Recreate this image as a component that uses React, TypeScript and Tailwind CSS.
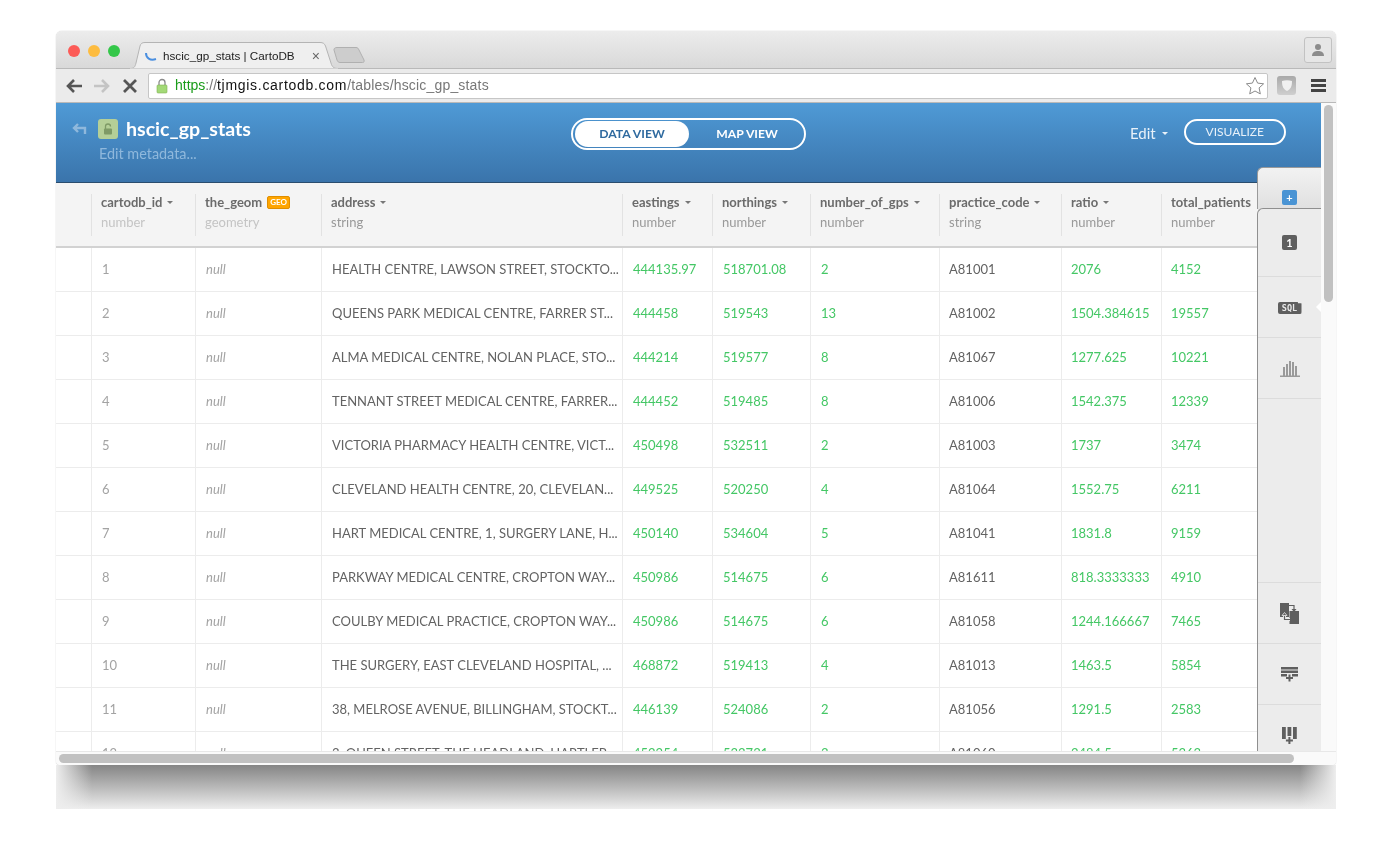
import React from "react";

const rows: string[][] = [
  ["1", "HEALTH CENTRE, LAWSON STREET, STOCKTO...", "444135.97", "518701.08", "2", "A81001", "2076", "4152"],
  ["2", "QUEENS PARK MEDICAL CENTRE, FARRER ST...", "444458", "519543", "13", "A81002", "1504.384615", "19557"],
  ["3", "ALMA MEDICAL CENTRE, NOLAN PLACE, STO...", "444214", "519577", "8", "A81067", "1277.625", "10221"],
  ["4", "TENNANT STREET MEDICAL CENTRE, FARRER...", "444452", "519485", "8", "A81006", "1542.375", "12339"],
  ["5", "VICTORIA PHARMACY HEALTH CENTRE, VICT...", "450498", "532511", "2", "A81003", "1737", "3474"],
  ["6", "CLEVELAND HEALTH CENTRE, 20, CLEVELAN...", "449525", "520250", "4", "A81064", "1552.75", "6211"],
  ["7", "HART MEDICAL CENTRE, 1, SURGERY LANE, H...", "450140", "534604", "5", "A81041", "1831.8", "9159"],
  ["8", "PARKWAY MEDICAL CENTRE, CROPTON WAY...", "450986", "514675", "6", "A81611", "818.3333333", "4910"],
  ["9", "COULBY MEDICAL PRACTICE, CROPTON WAY...", "450986", "514675", "6", "A81058", "1244.166667", "7465"],
  ["10", "THE SURGERY, EAST CLEVELAND HOSPITAL, ...", "468872", "519413", "4", "A81013", "1463.5", "5854"],
  ["11", "38, MELROSE AVENUE, BILLINGHAM, STOCKT...", "446139", "524086", "2", "A81056", "1291.5", "2583"],
  ["12", "3, QUEEN STREET, THE HEADLAND, HARTLEP...", "452254", "533731", "3", "A81060", "2484.5", "5363"],
];

const Caret = () => (
  <span className="ml-[5px] inline-block h-0 w-0 border-x-[3px] border-t-[3px] border-x-transparent border-t-[#777] align-middle" />
);

function HeadCell({ w, name, type, caret = true, faint = false, geo = false }: { w: string; name: string; type: string; caret?: boolean; faint?: boolean; geo?: boolean }) {
  return (
    <div className={`${w} flex h-full shrink-0 items-center`}>
      <div className="h-[42px] w-px shrink-0 bg-[#e2e2e2]" />
      <div className="mb-[5px] pl-[9px] leading-none">
        <div className="flex h-[16px] items-center whitespace-nowrap text-[13px] font-bold text-[#6b6b6b]">
          {name}
          {caret && <Caret />}
          {geo && (
            <span className="ml-[5px] rounded-[2px] border border-[#e08e00] bg-[#ffa500] px-[2px] text-[8px] leading-[11px] font-bold text-white">GEO</span>
          )}
        </div>
        <div className={`mt-[3px] text-[13px] leading-[16px] ${faint ? "text-[#c4c4c4]" : "text-[#999]"}`}>{type}</div>
      </div>
    </div>
  );
}

function Cell({ w, children, cls, pad = "pl-[10px]" }: { w: string; children: React.ReactNode; cls: string; pad?: string }) {
  return (
    <div className={`${w} flex h-full shrink-0 items-center overflow-hidden whitespace-nowrap border-l border-[#ececec] ${pad} text-[13px] ${cls}`}>
      {children}
    </div>
  );
}

const SideRow = ({ h, children, last = false }: { h: string; children?: React.ReactNode; last?: boolean }) => (
  <div className={`${h} flex shrink-0 items-center justify-center ${last ? "" : "border-b border-[#dcdcdc]"}`}>{children}</div>
);

export default function App() {
  const green = "text-[#44c765]";
  return (
    <div className="relative h-[845px] w-full overflow-hidden bg-white pl-[56px] pt-[31px] font-['Lato',sans-serif] will-change-transform">
      <div className="flex w-[1280px] flex-col">
        <div className="relative flex h-[734px] flex-col overflow-hidden rounded-t-[6px] rounded-b-[4px] bg-white shadow-[0_0_1px_rgba(0,0,0,0.35)]">
          {/* tab strip */}
          <div className="flex h-[38px] shrink-0 items-end border-b border-[#b9b9b9] bg-gradient-to-b from-[#ececec] to-[#d9d9d9] pl-[12px] font-['Liberation_Sans',sans-serif]">
            <div className="flex gap-[8px] self-center pt-[2px]">
              <span className="h-[12px] w-[12px] rounded-full bg-[#fc5b57]" />
              <span className="h-[12px] w-[12px] rounded-full bg-[#fdbc40]" />
              <span className="h-[12px] w-[12px] rounded-full bg-[#34c749]" />
            </div>
            <div className="relative -mb-px ml-[10px] flex h-[27px] w-[208px] shrink-0 items-center pl-[14px]">
              <svg width="208" height="27" viewBox="0 0 208 27" className="absolute inset-0">
                <path d="M0 26.500C4 26.500 5 25 6 21L10 4C10.800 1.500 12 .5 15 .5H190C193 .5 194.500 1.500 195.500 4L201 21C202 25 204 26.500 208 26.500Z" fill="#efefef" stroke="#b4b4b4" />
                <rect x="0" y="26.500" width="208" height="1" fill="#efefef" />
              </svg>
              <svg width="14" height="14" viewBox="0 0 14 14" className="relative mt-[3px]"><path d="M2 3c0 5 4 8 10 6" fill="none" stroke="#4a8fe0" strokeWidth="2" /></svg>
              <span className="relative ml-[5px] whitespace-nowrap text-[11.700px] text-[#222]">hscic_gp_stats | CartoDB</span>
              <span className="relative ml-[17px] text-[14px] leading-none text-[#666]">×</span>
            </div>
            <svg width="32" height="16" viewBox="0 0 32 16" className="relative mb-[5px] ml-[-5px]">
              <path d="M4 .5H23C24.500 .5 25.500 1.500 26 3L31 13C31.500 14.500 31 15.500 29.500 15.500H7C5.500 15.500 4.500 14.500 4 13L1 3C.7 1.500 2 .5 4 .5Z" fill="#cdcdcd" stroke="#b0b0b0" />
            </svg>
            <div className="ml-auto mr-[4px] flex h-[26px] w-[28px] items-center justify-center self-center rounded-[3px] border border-[#c2c2c2] bg-[#e6e6e6]">
              <svg width="16" height="14" viewBox="0 0 16 14" fill="#8c8c8c"><circle cx="8" cy="4" r="3" /><path d="M2 13c0-4 3-5 6-5s6 1 6 5z" /></svg>
            </div>
          </div>
          {/* toolbar */}
          <div className="flex h-[34px] shrink-0 items-center border-b border-[#b9b9b9] bg-[#ebebeb] font-['Liberation_Sans',sans-serif]">
            <svg width="18" height="16" viewBox="0 0 18 16" className="ml-[9px]" fill="none" stroke="#555" strokeWidth="2.600"><path d="M17 8H3M9 2 3 8l6 6" /></svg>
            <svg width="18" height="16" viewBox="0 0 18 16" className="ml-[10px]" fill="none" stroke="#c4c4c4" strokeWidth="2.600"><path d="M1 8h14M9 2l6 6-6 6" /></svg>
            <svg width="14" height="14" viewBox="0 0 14 14" className="ml-[12px]" fill="none" stroke="#555" strokeWidth="2.800"><path d="M1 1l12 12M13 1 1 13" /></svg>
            <div className="ml-[11px] flex h-[26px] w-[1120px] shrink-0 items-center rounded-[2px] border border-[#c6c6c6] bg-white pl-[7px] text-[14px]">
              <svg width="12" height="16" viewBox="0 0 12 16"><path d="M3 7V4.500a3 3 0 0 1 6 0V7" fill="none" stroke="#8a8a8a" strokeWidth="1.300" /><rect x="1" y="7" width="10" height="8" rx="1" fill="#a3d977" stroke="#7fb356" strokeWidth=".6" /></svg>
              <span className="ml-[7px] whitespace-nowrap">
                <span className="text-[#1a9c1a]">https</span><span className="text-[#777]">://</span><span className="tracking-[0.7px] text-[#111]">tjmgis.cartodb.com</span><span className="tracking-[0.18px] text-[#777]">/tables/hscic_gp_stats</span>
              </span>
              <svg width="20" height="19" viewBox="0 0 20 19" className="ml-auto mr-[2px]" fill="#fff" stroke="#8a8a8a" strokeWidth="1"><path d="m10 1.500 2.600 5.600 6 .7-4.500 4.100 1.200 6L10 15l-5.300 2.900 1.200-6L1.400 7.800l6-.7z" /></svg>
            </div>
            <div className="ml-[9px] flex h-[19px] w-[19px] items-center justify-center rounded-[3px] bg-gradient-to-b from-[#a9a9a9] to-[#cfcfcf]">
              <svg width="12" height="13" viewBox="0 0 12 13"><path d="M1 2c3-1 7-1 10 0 0 5-1 8-5 10C2 10 1 7 1 2z" fill="#f0f0f0" /></svg>
            </div>
            <div className="ml-[15px] flex w-[15px] flex-col gap-[2.500px]">
              <span className="h-[2.500px] bg-[#444]" />
              <span className="h-[2.500px] bg-[#444]" />
              <span className="h-[2.500px] bg-[#444]" />
            </div>
          </div>
          {/* page */}
          <div className="relative flex min-h-0 flex-1">
            <div className="flex w-[1265px] shrink-0 flex-col overflow-hidden">
              {/* blue header */}
              <div className="flex h-[80px] shrink-0 border-b border-[#2a4d6e] bg-gradient-to-b from-[#4f9ad6] to-[#3a74ab]">
                <div className="w-[515px] shrink-0 pl-[16px] pt-[16px]">
                  <div className="flex h-[20px] items-center">
                    <svg width="16" height="12" viewBox="0 0 16 12" fill="none" stroke="#8fb8dc" strokeWidth="2.400"><path d="M6 1 2 5l4 4M2 5h11v6" /></svg>
                    <span className="ml-[10px] flex h-[20px] w-[20px] items-center justify-center rounded-[3px] bg-[#b5cf97]">
                      <svg width="10" height="12" viewBox="0 0 10 12"><path d="M2.500 6V3.500a2.500 2.500 0 0 1 5 0" fill="none" stroke="#7f9a66" strokeWidth="1.300" /><rect x="1" y="5.500" width="8" height="6" rx="1" fill="#7f9a66" /></svg>
                    </span>
                    <span className="ml-[8px] text-[19.600px] leading-none font-bold text-white">hscic_gp_stats</span>
                  </div>
                  <div className="ml-[27px] mt-[6px] text-[14.400px] leading-[17px] text-[#8fb8dc]">Edit metadata...</div>
                </div>
                <div className="mt-[15px] flex h-[32px] w-[235px] shrink-0 items-center rounded-full border-2 border-white p-[2px] text-[12.200px] font-bold">
                  <span className="flex h-[26px] w-[114px] items-center justify-center rounded-full bg-white text-[#2f6a9f]">DATA VIEW</span>
                  <span className="flex h-[26px] flex-1 items-center justify-center pl-[3px] text-white">MAP VIEW</span>
                </div>
                <div className="ml-[324px] mt-[17px] flex h-[26px] items-center text-[15px] text-[#e8f1f9]">
                  Edit
                  <span className="ml-[6px] h-0 w-0 border-x-[3.500px] border-t-[3.500px] border-x-transparent border-t-[#e8f1f9]" />
                </div>
                <div className="ml-[16px] mt-[16px] flex h-[26px] w-[102px] items-center justify-center rounded-full border-2 border-white text-[12px] text-[#e8f1f9]">VISUALIZE</div>
              </div>
              {/* table head */}
              <div className="flex h-[65px] shrink-0 items-center border-b-2 border-[#d2d2d2] bg-[#f4f4f4]">
                <div className="w-[35px] shrink-0" />
                <HeadCell w="w-[104px]" name="cartodb_id" type="number" faint />
                <HeadCell w="w-[126px]" name="the_geom" type="geometry" caret={false} geo faint />
                <HeadCell w="w-[301px]" name="address" type="string" />
                <HeadCell w="w-[90px]" name="eastings" type="number" />
                <HeadCell w="w-[98px]" name="northings" type="number" />
                <HeadCell w="w-[129px]" name="number_of_gps" type="number" />
                <HeadCell w="w-[122px]" name="practice_code" type="string" />
                <HeadCell w="w-[100px]" name="ratio" type="number" />
                <HeadCell w="w-[100px]" name="total_patients" type="number" caret={false} />
              </div>
              {/* rows */}
              <div className="min-h-0 flex-1 overflow-hidden">
                {rows.map((r) => (
                  <div key={r[0]} className="flex h-[44px] items-center border-b border-[#ececec]">
                    <div className="w-[35px] shrink-0" />
                    <Cell w="w-[104px]" cls="text-[#a3a3a3]">{r[0]}</Cell>
                    <Cell w="w-[126px]" cls="italic text-[#a3a3a3]">null</Cell>
                    <Cell w="w-[301px]" cls="text-[#636363]">{r[1]}</Cell>
                    <Cell w="w-[90px]" cls={green}>{r[2]}</Cell>
                    <Cell w="w-[98px]" cls={green}>{r[3]}</Cell>
                    <Cell w="w-[129px]" cls={green}>{r[4]}</Cell>
                    <Cell w="w-[122px]" pad="pl-[9px]" cls="text-[#636363]">{r[5]}</Cell>
                    <Cell w="w-[100px]" pad="pl-[9px]" cls={green}>{r[6]}</Cell>
                    <Cell w="w-[100px]" pad="pl-[9px]" cls={green}>{r[7]}</Cell>
                  </div>
                ))}
              </div>
            </div>
            {/* vertical scrollbar */}
            <div className="flex w-[15px] shrink-0 justify-center bg-[#fafafa] pt-[2px]">
              <div className="h-[197px] w-[9px] rounded-full bg-[#c1c1c1]" />
            </div>
            {/* horizontal scrollbar */}
            <div className="absolute bottom-0 left-0 right-0 flex h-[14px] items-center rounded-b-[4px] border-t border-[#e8e8e8] bg-[#fafafa] pl-[3px]">
              <div className="h-[9px] w-[1235px] rounded-full bg-[#c1c1c1]" />
            </div>
            {/* side panel */}
            <div className="absolute bottom-[14px] left-[1201px] top-[64px] w-[64px]">
              <div className="flex h-[42px] justify-center rounded-tl-[6px] border-l border-t border-[#9a9a9a] bg-gradient-to-b from-[#f2f2f2] to-[#e0e0e0] pt-[22px]">
                <span className="flex h-[15px] w-[15px] items-center justify-center rounded-[2px] bg-[#4a94d4] text-[11px] leading-none font-bold text-white">+</span>
              </div>
              <div className="absolute bottom-0 left-0 right-0 top-[41px] flex flex-col overflow-hidden rounded-tl-[6px] border-l border-t border-[#8f8f8f] bg-[#ececec]">
                <SideRow h="h-[68px]">
                  <span className="flex h-[15px] w-[15px] items-center justify-center rounded-[2px] bg-[#5f5f5f] text-[11px] leading-none font-bold text-white">1</span>
                </SideRow>
                <SideRow h="h-[61px]">
                  <span className="relative mt-[2px] flex h-[12px] w-[24px] items-center justify-center rounded-[2px] bg-[#5f5f5f] font-['DejaVu_Sans_Mono',monospace] text-[8.500px] leading-none font-bold text-[#e8e8e8] [clip-path:polygon(0_0,85%_0,85%_10%,100%_10%,100%_100%,0_100%)]">SQL</span>
                  <span className="absolute right-0 top-[93px] h-0 w-0 border-y-[5px] border-r-[5px] border-y-transparent border-r-white" />
                </SideRow>
                <SideRow h="h-[61px]">
                  <svg width="20" height="17" viewBox="0 0 20 17" fill="#9a9a9a"><rect x="3" y="7" width="2" height="9" /><rect x="6" y="4" width="2" height="12" /><rect x="9" y="1" width="2" height="15" /><rect x="12" y="2" width="2" height="14" /><rect x="15" y="6" width="2" height="10" /><rect y="15.500" width="20" height="1.500" /></svg>
                </SideRow>
                <div className="h-[184px] shrink-0 border-b border-[#dcdcdc]" />
                <SideRow h="h-[61px]">
                  <svg width="19" height="21" viewBox="0 0 19 21" fill="#5f5f5f">
                    <rect x="0" y="0" width="9" height="14" />
                    <rect x="9.500" y="8" width="9.500" height="13" />
                    <path d="M9 2.500h5v4" fill="none" stroke="#ececec" strokeWidth="3" />
                    <path d="M9 2.500h5v4" fill="none" stroke="#5f5f5f" strokeWidth="1.200" />
                    <path d="M11.500 6h5l-2.500 3z" />
                    <path d="M10 16.500H4.500v-4" fill="none" stroke="#ececec" strokeWidth="3" />
                    <path d="M10 16.500H4.500v-4" fill="none" stroke="#5f5f5f" strokeWidth="1.200" />
                    <path d="M2 12.500h5L4.500 9.500z" stroke="#ececec" strokeWidth=".8" />
                  </svg>
                </SideRow>
                <SideRow h="h-[61px]">
                  <svg width="17" height="15" viewBox="0 0 17 15" fill="#5f5f5f"><rect width="17" height="2.500" /><rect y="3.500" width="17" height="2.500" /><rect y="7" width="6" height="2.500" /><rect x="11" y="7" width="6" height="2.500" /><rect x="7.500" y="7.500" width="2" height="7" /><rect x="5" y="10" width="7" height="2" /></svg>
                </SideRow>
                <SideRow h="h-[61px]" last>
                  <svg width="15" height="17" viewBox="0 0 15 17" fill="#5f5f5f"><rect width="3.800" height="12" /><rect x="11" width="3.800" height="12" /><rect x="5.500" width="3.800" height="9" /><rect x="6.400" y="10" width="2" height="7" /><rect x="3.900" y="12.500" width="7" height="2" /></svg>
                </SideRow>
              </div>
            </div>
          </div>
        </div>
        {/* window shadow */}
        <div className="relative h-[44px] bg-gradient-to-b from-[#858585] to-[#eeeeee]">
          <div className="absolute inset-y-0 left-0 w-[36px] bg-gradient-to-r from-[#eeeeee] to-transparent" />
          <div className="absolute inset-y-0 right-0 w-[36px] bg-gradient-to-l from-[#eeeeee] to-transparent" />
        </div>
      </div>
    </div>
  );
}
